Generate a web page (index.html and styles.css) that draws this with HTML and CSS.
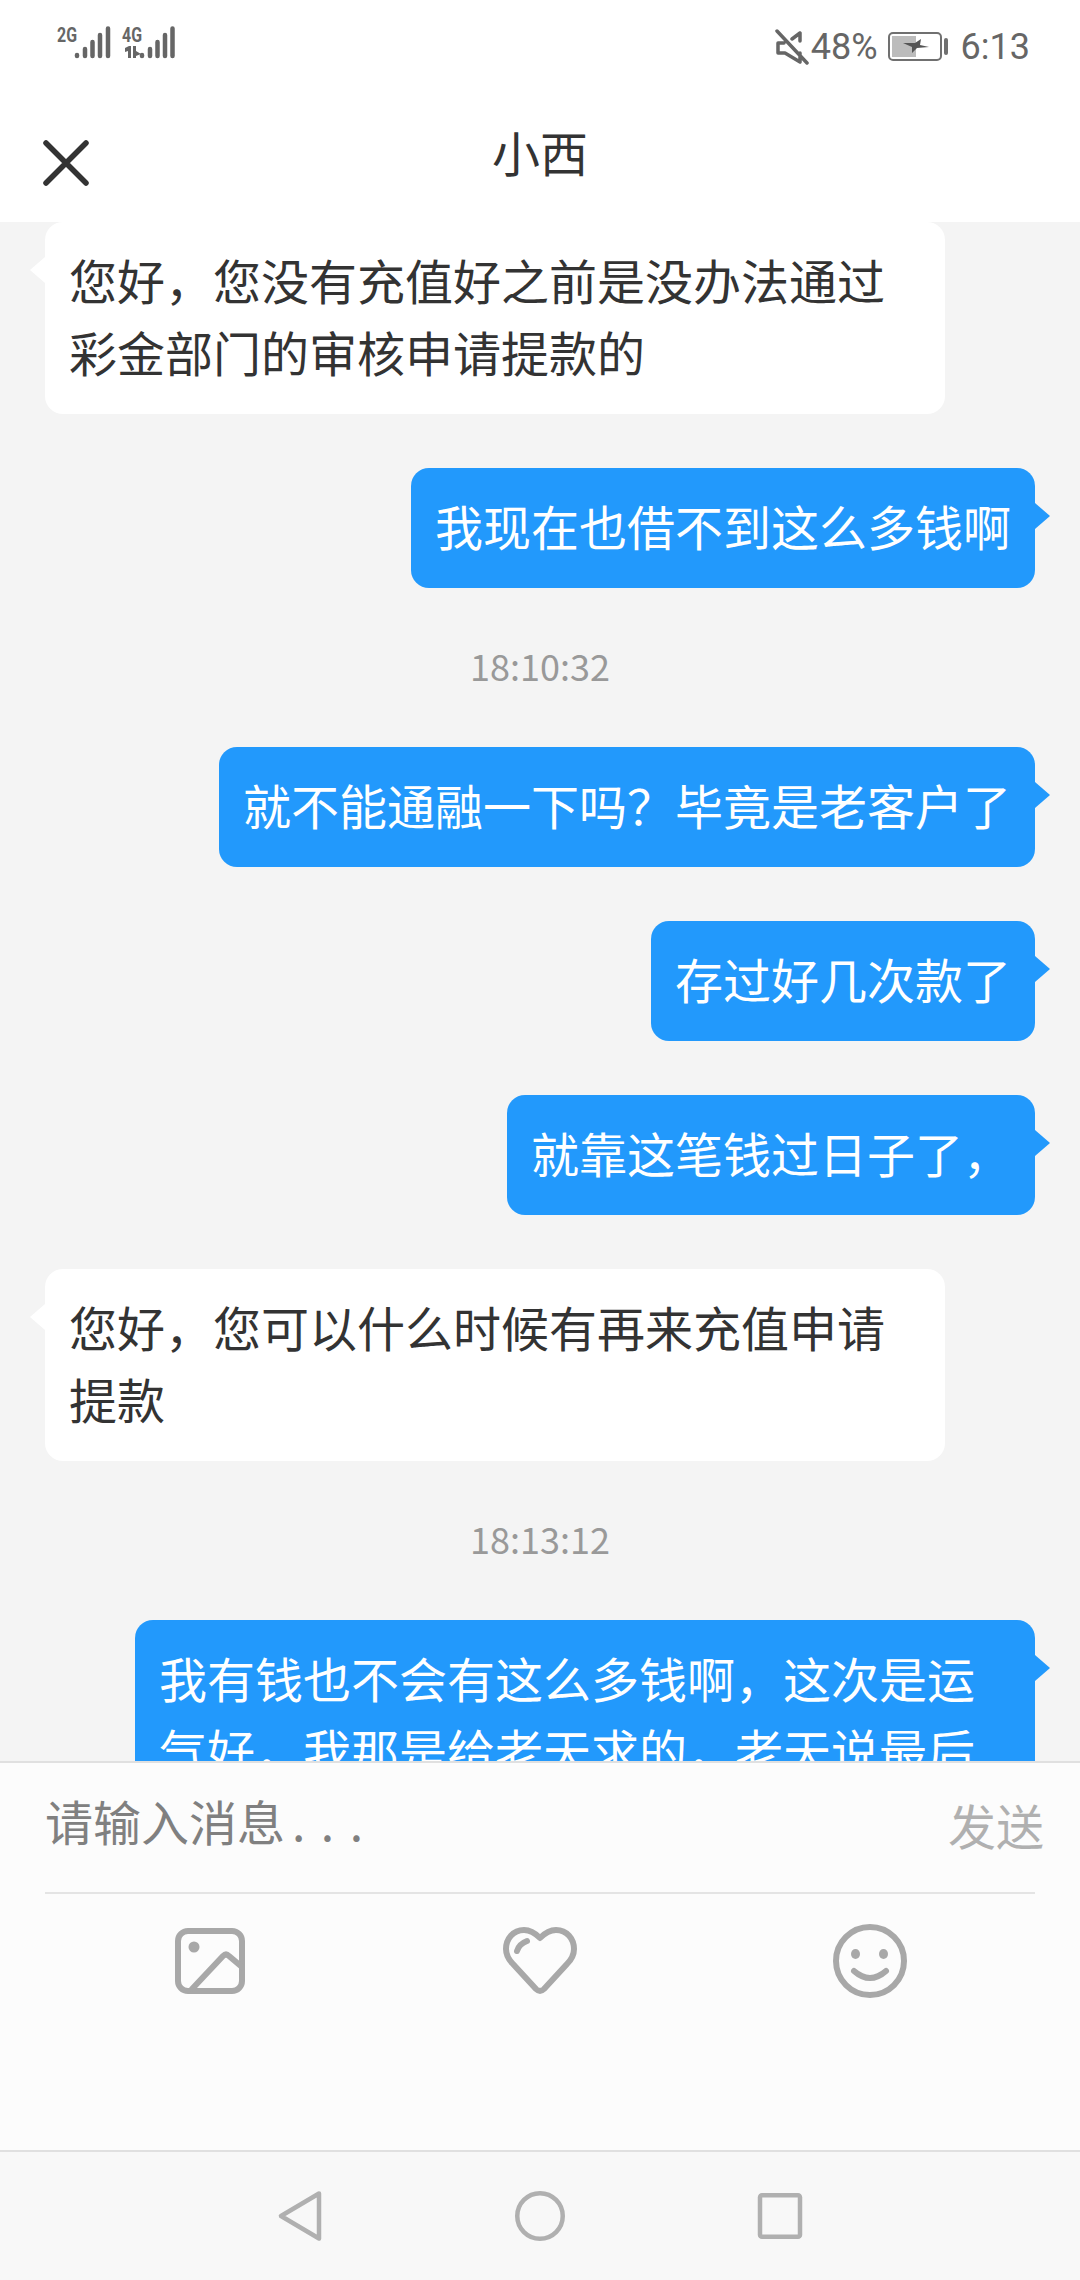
FILE: index.html
```html
<!DOCTYPE html>
<html lang="zh-CN">
<head>
<meta charset="utf-8">
<title>小西</title>
<link rel="stylesheet" href="styles.css">
</head>
<body>
<div class="page">
  <header class="header">
    <div class="status">
      <svg class="signal" width="130" height="52" viewBox="0 0 130 52">
        <text class="sig-text" x="0" y="28" textLength="20" lengthAdjust="spacingAndGlyphs">2G</text>
        <path class="bars" d="M20 41v1M28 35v7M35.500 28v14M43 21v21M51 14.500v27.500"/>
        <text class="sig-text" x="65" y="28" textLength="20" lengthAdjust="spacingAndGlyphs">4G</text>
        <path class="bars" d="M85 41v1M93 35v7M100.500 28v14M108 21v21M115.500 14.500v27.500"/>
        <path class="arrows" d="M68 34l4-2h2v12h-3v-7l-3 1zM76 32h3v5l5 3-5 2v2h-3z"/>
      </svg>
      <div class="status-right">
        <svg class="mute" width="34" height="36" viewBox="0 0 34 36">
          <path class="st-line" d="M25 4v8M25 4l-8 6M9 14H3v10h7l15 9V24M2 2l30 32"/>
        </svg>
        <span class="st-text">48%</span>
        <svg class="battery" width="62" height="30" viewBox="0 0 62 30">
          <rect class="batt-body" x="1" y="1" width="52" height="27" rx="4"/>
          <rect class="batt-fill" x="4" y="4" width="24" height="21"/>
          <rect class="batt-tip" x="56" y="6" width="4" height="17" rx="2"/>
          <path class="batt-bolt" d="M15 11l12 0 6-4-1 6 9 2-12 1-5 5 0-6z"/>
        </svg>
        <span class="st-text st-time">6:13</span>
      </div>
    </div>
    <div class="nav">
      <svg class="close" width="46" height="46" viewBox="0 0 46 46">
        <path d="M3 3l40 40M43 3L3 43"/>
      </svg>
      <h1 class="title">小西</h1>
    </div>
  </header>

  <main class="chat">
    <div class="msg left">您好，您没有充值好之前是没办法通过彩金部门的审核申请提款的</div>
    <div class="msg right">我现在也借不到这么多钱啊</div>
    <div class="time">18:10:32</div>
    <div class="msg right">就不能通融一下吗？毕竟是老客户了</div>
    <div class="msg right">存过好几次款了</div>
    <div class="msg right">就靠这笔钱过日子了，</div>
    <div class="msg left">您好，您可以什么时候有再来充值申请提款</div>
    <div class="time">18:13:12</div>
    <div class="msg right">我有钱也不会有这么多钱啊，这次是运气好，我那是给老天求的，老天说最后</div>
  </main>

  <section class="composer">
    <div class="input-row">
      <span class="placeholder">请输入消息<span class="dots">...</span></span>
      <span class="send">发送</span>
    </div>
    <div class="tools">
      <svg class="tool" width="70" height="66" viewBox="0 0 70 66">
        <rect x="3" y="3" width="64" height="60" rx="10"/>
        <circle class="tool-dot" cx="19" cy="19" r="5.500"/>
        <path d="M17 61l31-33q3-3 6 0l13 11"/>
      </svg>
      <svg class="tool" width="76" height="70" viewBox="0 0 76 70">
        <path d="M38 12C33 7 28 4 22 4 11 4 4 13 4 23c0 6 3 11 7 15l23 25q4 4 8 0l23-25c4-4 7-9 7-15C72 13 65 4 54 4 48 4 43 7 38 12z"/>
        <path d="M15 25q2-7 10-10"/>
      </svg>
      <svg class="tool" width="74" height="74" viewBox="0 0 74 74">
        <circle cx="37" cy="37" r="34"/>
        <ellipse class="tool-dot" cx="22.500" cy="30" rx="4.500" ry="5"/>
        <ellipse class="tool-dot" cx="50.500" cy="30" rx="4.500" ry="5"/>
        <path d="M21 47q16 14 32 0"/>
      </svg>
    </div>
  </section>

  <footer class="navbar">
    <svg class="nav-icon" width="60" height="60" viewBox="0 0 60 60">
      <path d="M49 7.500L11 30l38 22.500z"/>
    </svg>
    <svg class="nav-icon" width="60" height="60" viewBox="0 0 60 60">
      <circle cx="30" cy="30" r="22.750"/>
    </svg>
    <svg class="nav-icon" width="60" height="60" viewBox="0 0 60 60">
      <rect x="10" y="9.250" width="40" height="41.500" rx="2"/>
    </svg>
  </footer>
</div>
</body>
</html>
```
FILE: styles.css
```css
* { box-sizing: border-box; }

html, body {
  margin: 0;
  padding: 0;
}

body {
  font-family: "Noto Sans CJK SC", "Noto Sans", sans-serif;
  background: #f4f4f4;
}

.page {
  width: 1080px;
  height: 2280px;
  display: flex;
  flex-direction: column;
  overflow: hidden;
}

/* header */
.header {
  height: 222px;
  flex: none;
  background: #fff;
}

.status {
  height: 92px;
  display: flex;
  justify-content: space-between;
  align-items: flex-start;
  padding: 14px 50px 0 57px;
}

.sig-text {
  font-family: Roboto, sans-serif;
  font-weight: 700;
  font-size: 21px;
  fill: #666;
}

.bars {
  fill: none;
  stroke: #666;
  stroke-width: 4.500;
  stroke-linecap: round;
}

.arrows { fill: #666; }

.status-right {
  display: flex;
  align-items: center;
  height: 38px;
  margin-top: 14px;
}

.st-text {
  font-family: Roboto, sans-serif;
  font-size: 36px;
  line-height: 38px;
  color: #666;
}

.st-time { margin-left: 11px; }

.mute { margin-right: 2px; }
.battery { margin-left: 10px; }

.st-line {
  fill: none;
  stroke: #666;
  stroke-width: 3.500;
  stroke-linecap: round;
  stroke-linejoin: round;
}

.batt-body {
  fill: #fff;
  stroke: #707070;
  stroke-width: 2;
}

.batt-fill { fill: #bcbcbc; }
.batt-tip { fill: #707070; }
.batt-bolt { fill: #555; }

.nav {
  height: 130px;
  display: grid;
  grid-template-columns: 1fr auto 1fr;
  align-items: center;
}

.close {
  margin: 12px 0 0 43px;
}

.close path {
  fill: none;
  stroke: #333;
  stroke-width: 5.500;
  stroke-linecap: round;
}

.title {
  grid-column: 2;
  grid-row: 1;
  margin: 0 0 12px;
  font-size: 48px;
  font-weight: 400;
  line-height: 72px;
  color: #333;
}

/* chat */
.chat {
  flex: 1;
  min-height: 0;
  overflow: hidden;
  display: flex;
  flex-direction: column;
  gap: 54px;
  background: #f4f4f4;
}

.msg {
  position: relative;
  flex: none;
  max-width: 900px;
  padding: 21px 24px 27px;
  border-radius: 18px;
  font-size: 48px;
  line-height: 72px;
}

.msg::after {
  content: "";
  position: absolute;
  top: 35px;
  border-style: solid;
  border-width: 13px 0;
  border-color: transparent;
}

.left {
  align-self: flex-start;
  margin-left: 45px;
  background: #fff;
  color: #333;
}

.left::after {
  left: -15px;
  border-right: 15px solid #fff;
}

.right {
  align-self: flex-end;
  margin-right: 45px;
  background: #2299fc;
  color: #fff;
}

.right::after {
  right: -15px;
  border-left: 15px solid #2299fc;
}

.time {
  flex: none;
  text-align: center;
  font-size: 36px;
  line-height: 46px;
  padding-bottom: 5px;
  color: #999;
}

/* composer */
.composer {
  height: 389px;
  flex: none;
  background: #fcfcfc;
  border-top: 2px solid #e0e0e0;
  padding: 0 45px;
}

.input-row {
  height: 131px;
  display: flex;
  justify-content: space-between;
  align-items: center;
  border-bottom: 2px solid #e4e4e4;
}

.placeholder {
  font-size: 48px;
  line-height: 72px;
  color: #808080;
  margin-bottom: 16px;
}

.dots {
  letter-spacing: 15.500px;
  margin-left: 7px;
}

.send {
  font-size: 48px;
  line-height: 72px;
  color: #b0b0b0;
  margin: 0 -9px 8px 0;
}

.tools {
  display: grid;
  grid-template-columns: repeat(3, 1fr);
  justify-items: center;
  align-items: center;
  padding-top: 30px;
}

.tool {
  fill: none;
  stroke: #a8a8a8;
  stroke-width: 6;
  stroke-linecap: round;
  stroke-linejoin: round;
}

.tool .tool-dot {
  fill: #a8a8a8;
  stroke: none;
}

/* bottom navigation */
.navbar {
  height: 130px;
  flex: none;
  background: #f8f8f8;
  border-top: 2px solid #e0e0e0;
  display: flex;
  justify-content: center;
  align-items: center;
  gap: 180px;
}

.nav-icon {
  fill: none;
  stroke: #b0b0b0;
  stroke-width: 4.500;
  stroke-linejoin: round;
}
```
